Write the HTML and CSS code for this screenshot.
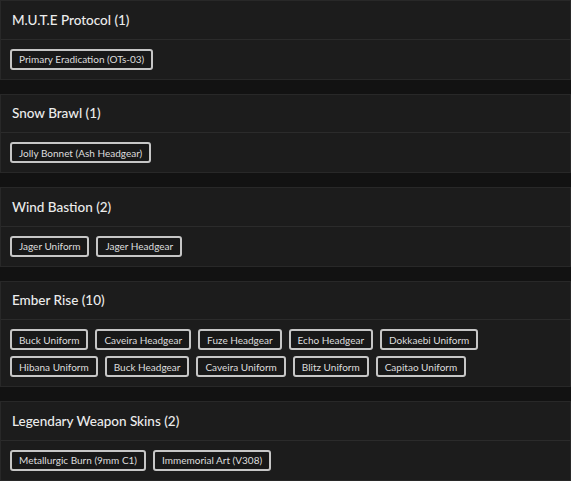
FILE: index.html
```html
<!DOCTYPE html>
<html>
<head>
<meta charset="utf-8">
<link rel="stylesheet" href="styles.css">
</head>
<body>
<div class="list">
  <section class="card">
    <div class="card-head">M.U.T.E Protocol (1)</div>
    <div class="card-body">
      <span class="tag">Primary Eradication (OTs-03)</span>
    </div>
  </section>
  <section class="card">
    <div class="card-head">Snow Brawl (1)</div>
    <div class="card-body">
      <span class="tag">Jolly Bonnet (Ash Headgear)</span>
    </div>
  </section>
  <section class="card">
    <div class="card-head">Wind Bastion (2)</div>
    <div class="card-body">
      <span class="tag">Jager Uniform</span>
      <span class="tag">Jager Headgear</span>
    </div>
  </section>
  <section class="card">
    <div class="card-head">Ember Rise (10)</div>
    <div class="card-body">
      <span class="tag">Buck Uniform</span>
      <span class="tag">Caveira Headgear</span>
      <span class="tag">Fuze Headgear</span>
      <span class="tag">Echo Headgear</span>
      <span class="tag">Dokkaebi Uniform</span>
      <span class="tag">Hibana Uniform</span>
      <span class="tag">Buck Headgear</span>
      <span class="tag">Caveira Uniform</span>
      <span class="tag">Blitz Uniform</span>
      <span class="tag">Capitao Uniform</span>
    </div>
  </section>
  <section class="card">
    <div class="card-head">Legendary Weapon Skins (2)</div>
    <div class="card-body">
      <span class="tag">Metallurgic Burn (9mm C1)</span>
      <span class="tag">Immemorial Art (V308)</span>
    </div>
  </section>
</div>
</body>
</html>
```

FILE: styles.css
```css
html, body {
  margin: 0;
  padding: 0;
  background: #121212;
}
body {
  font-family: Lato, "Open Sans", sans-serif;
  color: #e6e6e6;
}
.list {
  display: flex;
  flex-direction: column;
  gap: 14px;
}
.card {
  background: #1c1c1c;
  border: 1px solid #282828;
}
.card-head {
  height: 37.5px;
  display: flex;
  align-items: center;
  padding: 0 11px;
  font-size: 13.5px;
  font-weight: 500;
  color: #ececec;
  border-bottom: 1px solid #2b2b2b;
}
.card-body {
  display: flex;
  flex-wrap: wrap;
  gap: 6px 7px;
  padding: 9px;
}
.tag {
  display: inline-flex;
  align-items: center;
  height: 17px;
  padding: 0 7px;
  border: 2px solid #c6c6c6;
  border-radius: 3px;
  background: #181818;
  font-size: 10px;
  color: #dedede;
  white-space: nowrap;
}
```
